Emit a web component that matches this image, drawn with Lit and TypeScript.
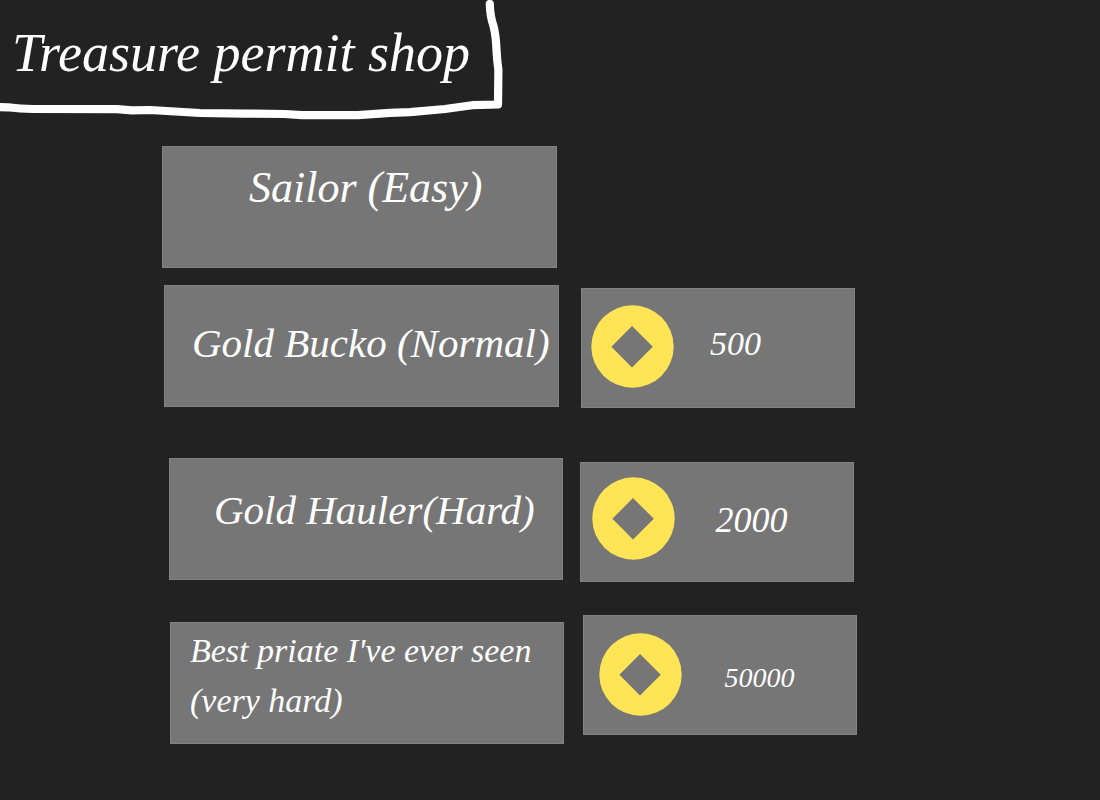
import { LitElement, html, css, nothing } from "lit";
import { customElement, property } from "lit/decorators.js";

interface Permit {
  id: string;
  lines: string[];
  price?: number;
}

const PERMITS: Permit[] = [
  { id: "sailor", lines: ["Sailor (Easy)"] },
  { id: "bucko", lines: ["Gold Bucko (Normal)"], price: 500 },
  { id: "hauler", lines: ["Gold Hauler(Hard)"], price: 2000 },
  { id: "best", lines: ["Best priate I've ever seen", "(very hard)"], price: 50000 },
];

/** Round gold coin with a diamond hole. */
@customElement("gold-coin")
export class GoldCoin extends LitElement {
  static styles = css`
    :host {
      display: block;
      flex: none;
      width: 83px;
      height: 83px;
    }
    .coin {
      display: block;
      width: 100%;
      height: 100%;
    }
  `;

  render() {
    return html`
      <svg class="coin" viewBox="0 0 83 83" aria-hidden="true">
        <path
          fill="#ffe455"
          fill-rule="evenodd"
          d="M41.5 .3a41.2 41.2 0 1 1 0 82.4a41.2 41.2 0 1 1 0-82.4ZM41 21L20.4 41.8L41 62.5L61.8 41.8Z"
        />
      </svg>
    `;
  }
}

/** One permit of the shop, with its price panel when it has to be bought. */
@customElement("permit-row")
export class PermitRow extends LitElement {
  @property({ attribute: false }) permit!: Permit;

  static styles = css`
    :host {
      display: block;
    }
    .row {
      display: grid;
      grid-template-columns: minmax(0, 395fr) minmax(0, 274fr);
      align-items: start;
    }
    .card,
    .price {
      box-sizing: border-box;
      display: flex;
      margin: 0;
      background: #767676;
      border: 1px solid #828282;
      color: #fff;
      line-height: 50px;
      white-space: nowrap;
    }
    .card {
      flex-direction: column;
      width: 100%;
      min-height: 122px;
      border-radius: 0;
      font-family: inherit;
      font-style: inherit;
      text-align: left;
      cursor: pointer;
    }
    .line {
      display: block;
    }
    .price {
      align-items: flex-start;
      min-height: 120px;
    }

    .sailor {
      column-gap: 22px;
      padding-right: 4px;
    }
    .sailor .card {
      padding: 16px 0 0 86px;
      font-size: 44px;
    }

    .bucko {
      column-gap: 22px;
      padding: 0 2px;
    }
    .bucko .card {
      padding: 32px 0 0 27px;
      font-size: 41px;
    }
    .bucko .price {
      margin-top: 3px;
      padding: 16px 0 0 9px;
      font-size: 34px;
    }
    .bucko .amount {
      padding: 14px 0 0 36px;
    }

    .hauler {
      column-gap: 17px;
      padding: 0 3px 0 7px;
    }
    .hauler .card {
      padding: 26px 0 0 44px;
      font-size: 41px;
    }
    .hauler .price {
      margin-top: 4px;
      padding: 14px 0 0 11px;
      font-size: 36px;
    }
    .hauler .amount {
      padding: 18px 0 0 40px;
    }

    .best {
      column-gap: 19px;
      padding-left: 8px;
    }
    .best .card {
      margin-top: 7px;
      padding: 3px 0 0 19px;
      font-size: 34px;
    }
    .best .price {
      padding: 17px 0 0 15px;
      font-size: 28px;
    }
    .best .amount {
      padding: 20px 0 0 42px;
    }
  `;

  render() {
    const { id, lines, price } = this.permit;
    return html`
      <div class="row ${id}">
        <button class="card" type="button">
          ${lines.map((line) => html`<span class="line">${line}</span>`)}
        </button>
        ${price === undefined
          ? nothing
          : html`<p class="price">
              <gold-coin></gold-coin><span class="amount">${price}</span>
            </p>`}
      </div>
    `;
  }
}

@customElement("app-root")
export class AppRoot extends LitElement {
  static styles = css`
    :host {
      display: block;
      box-sizing: border-box;
      min-height: 100vh;
      background: #222;
      color: #fff;
      font-family: "Viner Hand ITC", "Liberation Serif", serif;
      font-style: italic;
    }
    .header {
      position: relative;
      padding: 23px 12px 63px;
    }
    .title {
      margin: 0;
      font-size: 54px;
      font-weight: 400;
      line-height: 60px;
    }
    .frame {
      position: absolute;
      top: 0;
      left: 0;
      width: 510px;
      height: 125px;
      pointer-events: none;
    }
    .permits {
      display: flex;
      flex-direction: column;
      margin: 0;
      padding: 0 243px 56px 162px;
      list-style: none;
    }
    .permit {
      margin-bottom: 17px;
    }
    .permit.bucko {
      margin-bottom: 50px;
    }
    .permit.hauler {
      margin-bottom: 33px;
    }
    .permit.best {
      margin-bottom: 0;
    }
  `;

  render() {
    return html`
      <header class="header">
        <svg class="frame" viewBox="0 0 510 125" aria-hidden="true">
          <path
            fill="none"
            stroke="#fff"
            stroke-width="8.2"
            stroke-linecap="round"
            stroke-linejoin="round"
            d="M-5 107L8 107.3Q20 109 33 109L117 109.2L132 110.3L150 110L175 111.5L200 113L245 113.6L285 114L302 115.2L358 115.2L390 112.8L410 112.2L445 109L472 105.2L498 104.5L498.4 70Q497 60 496.5 50Q496 36 493.5 26Q490 16 489.8 4"
          />
        </svg>
        <h1 class="title">Treasure permit shop</h1>
      </header>
      <ul class="permits">
        ${PERMITS.map(
          (permit) => html`
            <li class="permit ${permit.id}">
              <permit-row .permit=${permit}></permit-row>
            </li>
          `,
        )}
      </ul>
    `;
  }
}
